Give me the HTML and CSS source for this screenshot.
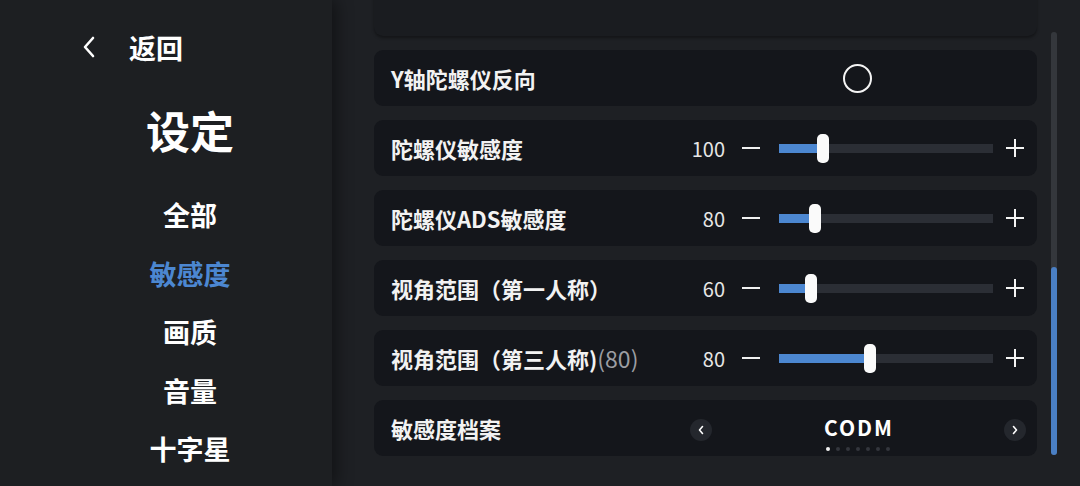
FILE: index.html
```html
<!DOCTYPE html>
<html lang="zh-CN">
<head>
<meta charset="utf-8">
<link rel="stylesheet" href="styles.css">
</head>
<body>
<div class="app">
  <aside class="sidebar">
    <div class="back">
      <svg class="back-icon" width="16" height="22" viewBox="0 0 16 22"><path d="M12 2 L4 11 L12 20" fill="none" stroke="#fff" stroke-width="2.6" stroke-linecap="round" stroke-linejoin="round"/></svg>
      <span>返回</span>
    </div>
    <h1 class="title">设定</h1>
    <nav class="menu">
      <div class="menu-item">全部</div>
      <div class="menu-item active">敏感度</div>
      <div class="menu-item">画质</div>
      <div class="menu-item">音量</div>
      <div class="menu-item">十字星</div>
    </nav>
  </aside>
  <main class="main">
    <div class="list">
      <div class="row row-partial"></div>
      <div class="row">
        <div class="label">Y轴陀螺仪反向</div>
        <div class="ctrl-box"><span class="toggle"></span></div>
      </div>
      <div class="row">
        <div class="label">陀螺仪敏感度</div>
        <div class="value">100</div>
        <span class="minus"></span>
        <div class="track"><div class="fill" style="width:44px"></div></div>
        <span class="plus"></span>
      </div>
      <div class="row">
        <div class="label">陀螺仪ADS敏感度</div>
        <div class="value">80</div>
        <span class="minus"></span>
        <div class="track"><div class="fill" style="width:36px"></div></div>
        <span class="plus"></span>
      </div>
      <div class="row">
        <div class="label">视角范围（第一人称）</div>
        <div class="value">60</div>
        <span class="minus"></span>
        <div class="track"><div class="fill" style="width:32px"></div></div>
        <span class="plus"></span>
      </div>
      <div class="row">
        <div class="label">视角范围（第三人称)<span class="dim">(80)</span></div>
        <div class="value">80</div>
        <span class="minus"></span>
        <div class="track"><div class="fill" style="width:91px"></div></div>
        <span class="plus"></span>
      </div>
      <div class="row">
        <div class="label">敏感度档案</div>
        <div class="ctrl-box profile">
          <span class="arrow"><svg width="8" height="10" viewBox="0 0 8 10"><path d="M5.5 1.5 L2.5 5 L5.5 8.5" fill="none" stroke="#fff" stroke-width="1.6" stroke-linecap="round" stroke-linejoin="round"/></svg></span>
          <div class="profile-center">
            <div class="profile-name">CODM</div>
            <div class="dots"><i class="on"></i><i></i><i></i><i></i><i></i><i></i><i></i></div>
          </div>
          <span class="arrow"><svg width="8" height="10" viewBox="0 0 8 10"><path d="M2.5 1.5 L5.5 5 L2.5 8.5" fill="none" stroke="#fff" stroke-width="1.6" stroke-linecap="round" stroke-linejoin="round"/></svg></span>
        </div>
      </div>
    </div>
    <div class="scrollbar"><div class="scroll-thumb"></div></div>
  </main>
</div>
</body>
</html>
```
FILE: styles.css
```css
* { box-sizing: border-box; }
html, body { margin: 0; padding: 0; }
body {
  width: 1080px;
  height: 486px;
  overflow: hidden;
  background: #1e2024;
  color: #fff;
  font-family: "Noto Sans CJK SC", "Noto Sans", sans-serif;
}
.app { display: flex; height: 486px; }

.sidebar {
  width: 332px;
  flex: none;
  background: #1d1f22;
  padding-left: 48px;
  position: relative;
  z-index: 2;
  box-shadow: 4px 0 16px rgba(0,0,0,0.45);
  display: flex;
  flex-direction: column;
}
.back {
  display: flex;
  align-items: center;
  margin-top: 27px;
  height: 40px;
  margin-left: 33px;
  font-size: 27px;
  font-weight: 700;
}
.back-icon { margin-right: 32px; }
.title {
  margin: 0;
  height: 60px;
  line-height: 60px;
  margin-top: 33px;
  text-align: center;
  font-size: 44px;
  font-weight: 700;
}
.menu { margin-top: 26px; display: flex; flex-direction: column; }
.menu-item {
  height: 58.6px;
  line-height: 58.6px;
  text-align: center;
  font-size: 27px;
  font-weight: 700;
}
.menu-item.active { color: #4c87d1; }

.main {
  flex: 1;
  display: flex;
  padding-left: 42px;
  gap: 14px;
}
.list {
  width: 663px;
  display: flex;
  flex-direction: column;
  gap: 14px;
  margin-top: -20px;
}
.row {
  height: 56px;
  flex: none;
  background: #14161b;
  border-radius: 9px;
  display: flex;
  align-items: center;
  padding: 0 13px 0 17px;
}
.row-partial { background: #1a1c20; box-shadow: 0 2px 3px rgba(0,0,0,0.35); }
.label {
  flex: 1;
  font-size: 22px;
  font-weight: 700;
  color: #f2f2f2;
  white-space: nowrap;
}
.dim { color: #9c9ea3; font-weight: 400; font-size: 23px; }
.value {
  width: 50px;
  text-align: right;
  font-size: 20px;
  color: #e6e6e6;
}
.minus {
  width: 18px;
  height: 2px;
  background: #f0f0f0;
  margin-left: 17px;
}
.track {
  width: 214px;
  height: 9px;
  background: #2b2e35;
  margin-left: 19px;
  position: relative;
}
.fill {
  height: 100%;
  background: #4c87d1;
  position: relative;
}
.fill::after {
  content: "";
  position: absolute;
  right: -6px;
  top: -10px;
  width: 12px;
  height: 29px;
  border-radius: 5px;
  background: #fafafa;
}
.plus {
  width: 18px;
  height: 18px;
  margin-left: 13px;
  position: relative;
}
.plus::before, .plus::after {
  content: "";
  position: absolute;
  background: #f4f4f4;
}
.plus::before { left: 0; top: 8px; width: 18px; height: 2.4px; }
.plus::after { left: 7.8px; top: 0; width: 2.4px; height: 18px; }

.ctrl-box {
  width: 336px;
  margin-right: -2px;
  display: flex;
  align-items: center;
  justify-content: center;
  height: 100%;
}
.toggle {
  width: 29px;
  height: 29px;
  border: 2px solid #f4f4f4;
  border-radius: 50%;
  margin-left: -2px;
}
.profile { justify-content: space-between; }
.arrow {
  width: 22px;
  height: 22px;
  border-radius: 50%;
  background: #24272d;
  display: flex;
  align-items: center;
  justify-content: center;
  margin-top: 4px;
}
.profile-center {
  display: flex;
  flex-direction: column;
  align-items: center;
  padding-top: 8px;
}
.profile-name {
  font-size: 21px;
  font-weight: 700;
  letter-spacing: 2px;
  line-height: 28px;
  margin-right: -2px;
}
.dots { display: flex; gap: 6px; margin-top: 6px; }
.dots i {
  width: 4px;
  height: 4px;
  border-radius: 50%;
  background: #33363d;
}
.dots i.on { background: #f2f2f2; }

.scrollbar {
  width: 6px;
  margin-top: 32px;
  height: 423px;
  border-radius: 3px;
  background: #34373c;
  position: relative;
  display: flex;
  flex-direction: column;
  justify-content: flex-end;
}
.scroll-thumb {
  height: 188px;
  border-radius: 3px;
  background: #4a7fc4;
}
```
